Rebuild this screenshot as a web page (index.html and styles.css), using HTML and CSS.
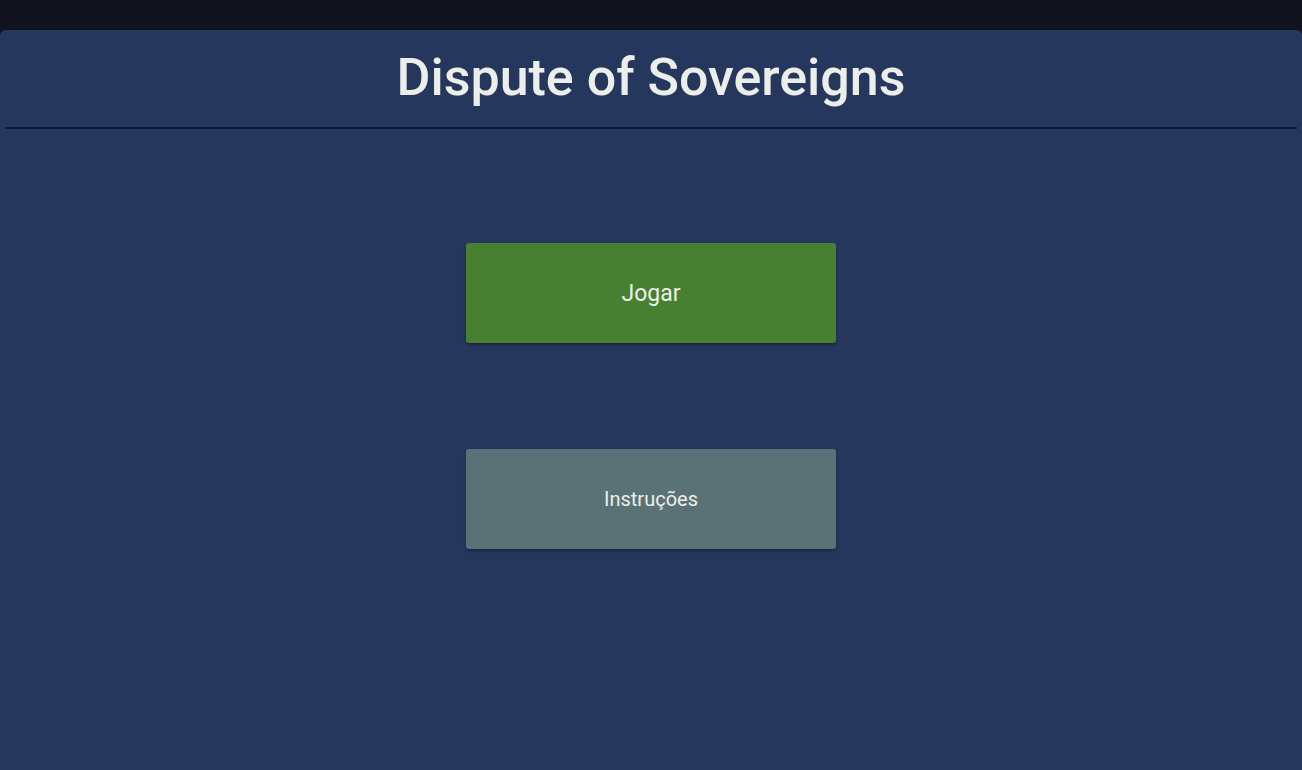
FILE: index.html
```html
<!DOCTYPE html>
<html lang="pt">
<head>
<meta charset="utf-8">
<title>Dispute of Sovereigns</title>
<link rel="stylesheet" href="styles.css">
</head>
<body>
<div class="panel">
  <header class="header">
    <h1 class="title">Dispute of Sovereigns</h1>
  </header>
  <div class="divider"></div>
  <main class="menu">
    <button class="btn btn-play">Jogar</button>
    <button class="btn btn-help">Instruções</button>
  </main>
</div>
</body>
</html>
```
FILE: styles.css
```css
html, body {
  margin: 0;
  padding: 0;
  height: 100%;
}
body {
  background: #10131e;
  font-family: Roboto, "Noto Sans", sans-serif;
  overflow: hidden;
}
.panel {
  margin-top: 30px;
  height: 740px;
  background: #26375e;
  border-radius: 6px 6px 0 0;
  display: flex;
  flex-direction: column;
}
.header {
  height: 97px;
  display: flex;
  justify-content: center;
  align-items: center;
}
.title {
  margin: 0 0 2px;
  color: #eceee9;
  font-size: 52px;
  font-weight: 500;
  line-height: 1;
}
.divider {
  height: 2px;
  margin: 0 5px;
  background: #13182a;
}
.menu {
  display: flex;
  flex-direction: column;
  align-items: center;
  padding-top: 114px;
  gap: 106px;
}
.btn {
  width: 370px;
  height: 100px;
  border: none;
  border-radius: 3px;
  color: #eceee9;
  font-family: Roboto, "Noto Sans", sans-serif;
  box-shadow: 0 2px 3px rgba(0, 0, 0, 0.35);
  cursor: pointer;
}
.btn-play {
  background: #488031;
  font-size: 23px;
}
.btn-help {
  background: #5a7275;
  font-size: 20px;
}
```
